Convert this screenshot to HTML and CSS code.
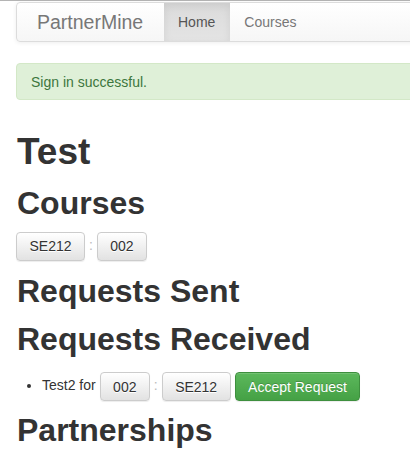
FILE: index.html
```html
<!DOCTYPE html>
<html>
<head>
<meta charset="utf-8">
<link rel="stylesheet" href="styles.css">
</head>
<body>
<div class="topline"></div>
<div class="container">
  <nav class="navbar">
    <span class="brand">PartnerMine</span>
    <ul class="nav">
      <li class="active"><a>Home</a></li>
      <li><a>Courses</a></li>
    </ul>
  </nav>
  <div class="alert">Sign in successful.</div>
  <h1>Test</h1>
  <h2>Courses</h2>
  <div class="row"><button class="btn">SE212</button><span class="sep"> : </span><button class="btn">002</button></div>
  <h2>Requests Sent</h2>
  <h2>Requests Received</h2>
  <ul class="list">
    <li>Test2 for <button class="btn">002</button><span class="sep"> : </span><button class="btn">SE212</button> <button class="btn btn-success">Accept Request</button></li>
  </ul>
  <h2>Partnerships</h2>
</div>
</body>
</html>
```

FILE: styles.css
```css
html, body {
  margin: 0;
  padding: 0;
  background: #fff;
  overflow: hidden;
}
body {
  font-family: "Liberation Sans", Arial, sans-serif;
  font-size: 14px;
  line-height: 20px;
  color: #333;
}
.topline {
  height: 1px;
  background: #b4b4b4;
}
.container {
  padding-left: 16px;
  margin-right: -30px;
}
.navbar {
  margin-top: 1px;
  height: 38px;
  border: 1px solid #dcdcdc;
  border-radius: 4px;
  background: linear-gradient(to bottom, #fff 0, #f6f6f6 100%);
  box-shadow: inset 0 1px 0 rgba(255,255,255,.15), 0 1px 4px rgba(0,0,0,.07);
  display: flex;
  align-items: stretch;
}
.brand {
  font-size: 19.5px;
  color: #777;
  padding-left: 20px;
  width: 127px;
  display: flex;
  align-items: center;
}
.nav {
  list-style: none;
  margin: 0;
  padding: 0;
  display: flex;
}
.nav li {
  display: flex;
}
.nav a {
  display: flex;
  align-items: center;
  padding: 0 15px 0 14px;
  color: #777;
}
.nav .active a {
  color: #555;
  background: linear-gradient(to bottom, #dbdbdb 0, #e4e4e4 100%);
  box-shadow: inset 0 3px 9px rgba(0,0,0,.075);
}
.alert {
  margin-top: 21px;
  padding: 8px 14px 7px;
  border: 1px solid #d3e8c7;
  border-radius: 4px;
  background: #dff0d8;
  color: #3c763d;
}
h1, h2 {
  font-weight: bold;
  line-height: 1.1;
  color: #333;
}
h1 {
  font-size: 37px;
  margin: 32px 0 11px 1px;
}
h2 {
  font-size: 32px;
  margin: 13px 0 11px 1px;
}
.row {
  height: 29px;
}
.btn {
  font-family: inherit;
  font-size: 14px;
  line-height: 20px;
  height: 29px;
  padding: 0 12.5px;
  border: 1px solid #ccc;
  border-radius: 4px;
  color: #333;
  background: linear-gradient(to bottom, #fff 0, #e2e2e2 100%);
  text-shadow: 0 1px 0 #fff;
  box-shadow: inset 0 1px 0 rgba(255,255,255,.15), 0 1px 1px rgba(0,0,0,.075);
  vertical-align: middle;
  margin: 0;
}
.btn-success {
  color: #fff;
  background: linear-gradient(to bottom, #5cb85c 0, #45a145 100%);
  border-color: #3e8f3e;
  text-shadow: 0 -1px 0 rgba(0,0,0,.2);
}
.sep {
  color: #bbb;
}
.list {
  margin: 14px 0 0;
  padding-left: 26px;
}
.list li {
  height: 29px;
  line-height: 29px;
}
```
